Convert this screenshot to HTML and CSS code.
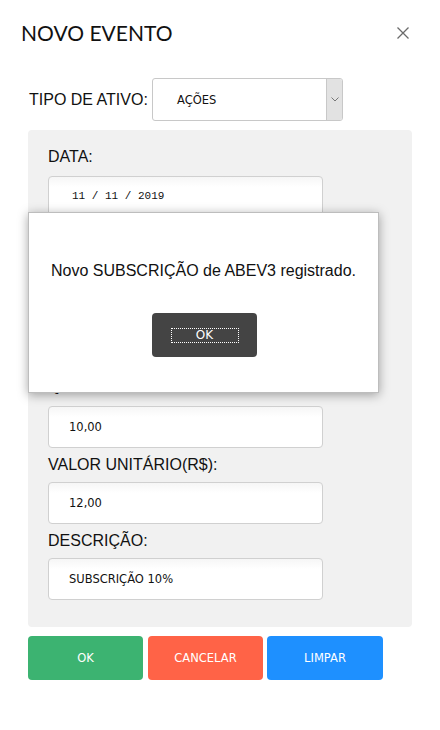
FILE: index.html
```html
<!DOCTYPE html>
<html lang="pt">
<head>
<meta charset="utf-8">
<title>Novo Evento</title>
<link rel="stylesheet" href="styles.css">
</head>
<body>
<div class="modal">
  <div class="header">
    <h1 class="title">NOVO EVENTO</h1>
    <button class="close" aria-label="Fechar">
      <svg width="12" height="12" viewBox="0 0 12 12"><path d="M0.5 0.5 L11.5 11.5 M11.5 0.5 L0.5 11.5" stroke="#6b6b6b" stroke-width="1.3" fill="none"/></svg>
    </button>
  </div>
  <div class="type-row">
    <span class="type-label">TIPO DE ATIVO:</span>
    <div class="select">
      <span class="select-value">AÇÕES</span>
      <span class="select-arrow">
        <svg width="8" height="5" viewBox="0 0 8 5"><path d="M0.5 0.5 L4 4 L7.5 0.5" stroke="#777" stroke-width="1" fill="none"/></svg>
      </span>
    </div>
  </div>
  <div class="panel">
    <div class="field field-date">
      <label class="label">DATA:</label>
      <div class="input mono">11 / 11 / 2019</div>
    </div>
    <div class="field field-gap">
      <label class="label">TIPO DE EVENTO:</label>
      <div class="input">SUBSCRIÇÃO</div>
    </div>
    <div class="field">
      <label class="label">ATIVO:</label>
      <div class="input">ABEV3</div>
    </div>
    <div class="field field-qty">
      <label class="label">QUANTIDADE:</label>
      <div class="input">10,00</div>
    </div>
    <div class="field">
      <label class="label">VALOR UNITÁRIO(R$):</label>
      <div class="input">12,00</div>
    </div>
    <div class="field">
      <label class="label">DESCRIÇÃO:</label>
      <div class="input">SUBSCRIÇÃO 10%</div>
    </div>
  </div>
  <div class="actions">
    <button class="btn btn-ok">OK</button>
    <button class="btn btn-cancel">CANCELAR</button>
    <button class="btn btn-clear">LIMPAR</button>
  </div>
</div>
<div class="alert">
  <p class="alert-msg">Novo SUBSCRIÇÃO de ABEV3 registrado.</p>
  <button class="alert-btn"><span class="alert-focus">OK</span></button>
</div>
</body>
</html>
```
FILE: styles.css
```css
* { box-sizing: border-box; }
body {
  margin: 0;
  background: #fff;
  font-family: "Liberation Sans", Arial, sans-serif;
  color: #111;
}
.modal { padding: 0; }
.header {
  display: flex;
  justify-content: space-between;
  align-items: center;
  padding: 18px 31px 0 21px;
  height: 48px;
}
.title {
  margin: 0;
  font-family: Lato, "Noto Sans", sans-serif;
  font-weight: 400;
  font-size: 21px;
  line-height: 26px;
  color: #111;
}
.close {
  border: 0;
  background: none;
  padding: 0;
  width: 12px;
  height: 12px;
  display: flex;
}
.type-row {
  display: flex;
  align-items: center;
  margin: 30px 0 0 29px;
  height: 43px;
}
.type-label {
  font-size: 16px;
  width: 123px;
}
.select {
  width: 191px;
  height: 43px;
  border: 1px solid #c8c8c8;
  border-radius: 3px;
  display: flex;
  align-items: center;
  justify-content: space-between;
  background: #fff;
}
.select-value {
  font-family: "DejaVu Sans", Tahoma, sans-serif;
  font-size: 11.5px;
  padding-left: 24px;
  color: #111;
}
.select-arrow {
  width: 16px;
  height: 41px;
  background: #e2e2e2;
  border-left: 1px solid #c8c8c8;
  display: flex;
  align-items: center;
  justify-content: center;
  border-radius: 0 2px 2px 0;
}
.panel {
  margin: 9px 28px 0 28px;
  background: #f1f1f1;
  border-radius: 4px;
  padding: 18px 20px 27px 20px;
}
.field { display: flex; flex-direction: column; }
.field + .field { margin-top: 8px; }
.label {
  font-size: 16px;
  line-height: 18px;
  margin-bottom: 8px;
}
.field-date .label { margin-bottom: 10px; }
.field.field-gap { margin-top: 10px; }
.field.field-qty { margin-top: 5px; }
.field-qty .label { margin-bottom: 11px; }
.input {
  width: 275px;
  height: 42px;
  border: 1px solid #d0d0d0;
  border-radius: 4px;
  background: linear-gradient(#f6f6f6, #fff 10px);
  display: flex;
  align-items: center;
  padding-left: 20px;
  font-family: "DejaVu Sans", Tahoma, sans-serif;
  font-size: 11.5px;
  color: #111;
}
.input.mono {
  font-family: "Liberation Mono", "Courier New", monospace;
  font-size: 11px;
  padding-left: 23px;
  align-items: flex-start;
  padding-top: 13px;
}
.actions {
  display: flex;
  gap: 5px;
  margin: 9px 0 0 28px;
}
.btn {
  width: 115px;
  height: 44px;
  border: 0;
  border-radius: 4px;
  color: #fff;
  font-family: "DejaVu Sans", Tahoma, sans-serif;
  font-size: 11.5px;
}
.btn-ok { background: #3cb371; }
.btn-cancel { background: #ff6347; }
.btn-clear { background: #1e90ff; width: 116px; margin-left: -1px; }
.alert {
  position: absolute;
  left: 28px;
  top: 212px;
  width: 351px;
  height: 181px;
  background: #fff;
  border: 1px solid #bdbdbd;
  box-shadow: 0 2px 10px rgba(0,0,0,0.35);
  display: flex;
  flex-direction: column;
  align-items: center;
}
.alert-msg {
  margin: 49px 0 0 0;
  font-size: 16px;
  line-height: 18px;
  color: #111;
}
.alert-btn {
  margin-top: 33px;
  width: 105px;
  height: 44px;
  background: #444;
  border: 0;
  border-radius: 4px;
  display: flex;
  align-items: center;
  justify-content: center;
  padding: 0;
  margin-left: 2px;
}
.alert-focus {
  width: 68px;
  height: 15px;
  border: 1px dotted #fff;
  color: #fff;
  font-family: "DejaVu Sans", Tahoma, sans-serif;
  font-size: 12px;
  line-height: 13px;
  text-align: center;
}
```
